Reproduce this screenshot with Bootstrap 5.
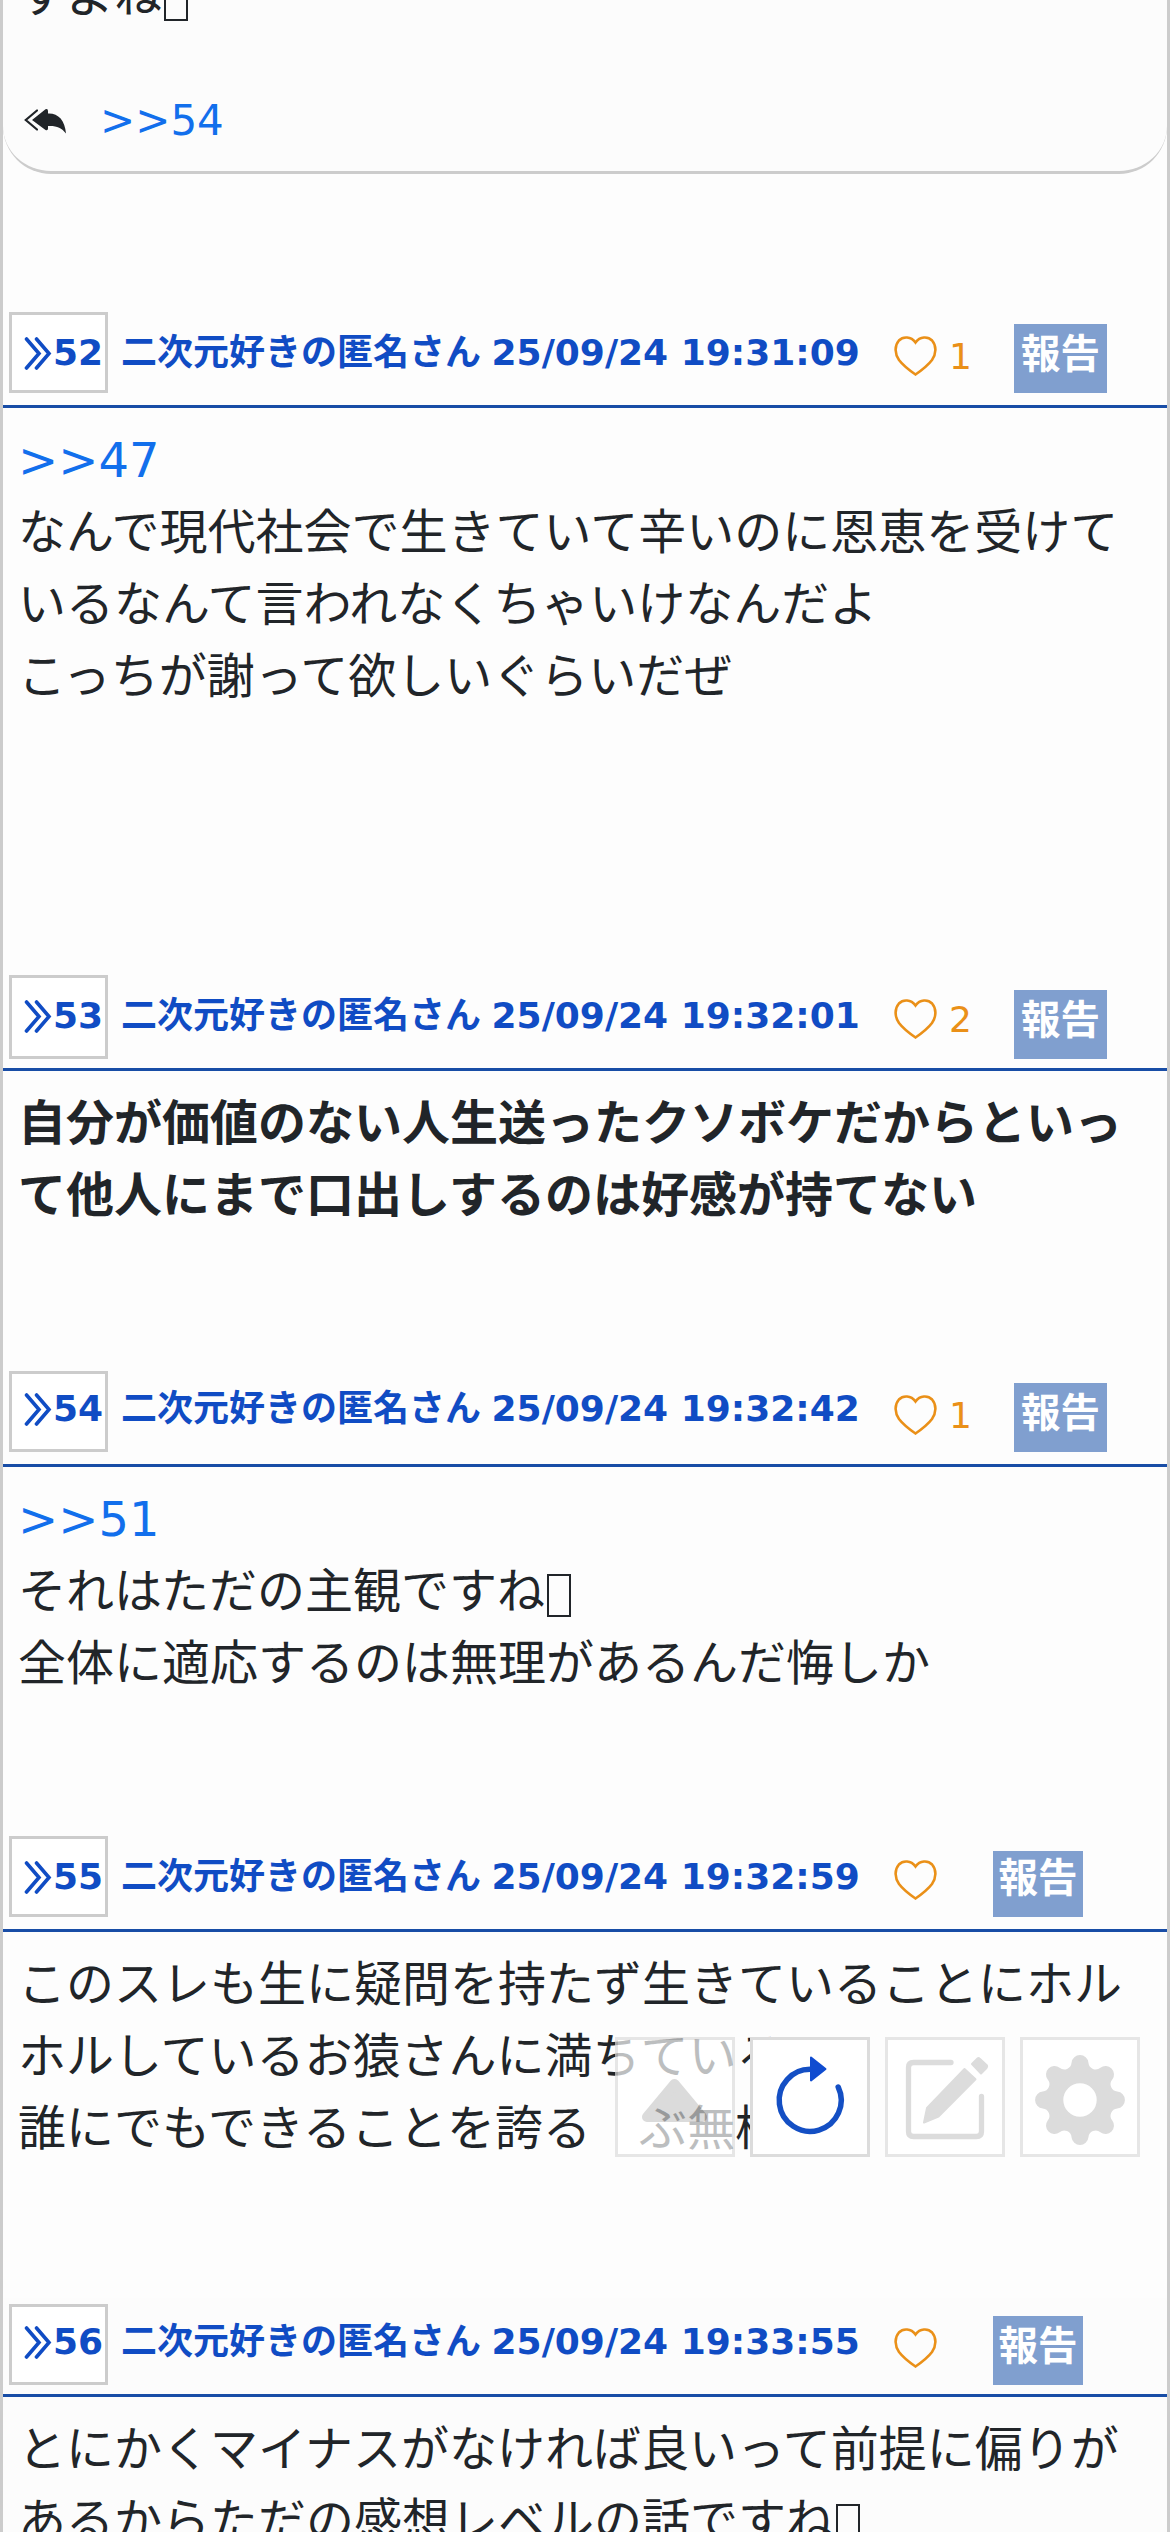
<!DOCTYPE html>
<html lang="ja">
<head>
<meta charset="utf-8">
<meta name="viewport" content="width=device-width, initial-scale=1">
<title>二次元好きの匿名さん</title>
<link rel="stylesheet" href="https://cdn.jsdelivr.net/npm/bootstrap@5.3.0/dist/css/bootstrap.min.css">
<style>
body{font-family:"DejaVu Sans","Noto Sans CJK JP",sans-serif;font-size:48px;line-height:72px;color:#212529;background:#fdfdfd}
.thread{height:2532px;border:solid #ccc;border-width:0 3px}
.post-51{height:309px}
.post-51 .reply-box{height:174px;border-bottom:3px solid #ccc;border-radius:0 0 48px 48px;background:#fcfcfc;padding:0 15px}
.post-51 .tail{margin-top:-41px}
.replies{margin-top:58px;padding-left:6px;font-size:42px;line-height:63px}
.replies a{margin-left:33px}
a{color:#126fec;text-decoration:none}
.glyph-box{width:24px;height:43px;border:2.500px solid #212529;vertical-align:-9px;margin-left:2px}
.post-head{height:99px;border-bottom:3px solid #184da6;padding-left:6px;--box-top:3px;--box-h:81px;--name-top:17px;--heart-top:27px;--rep-top:15px;--rep-h:69px}
.res-no{width:99px;height:var(--box-h);margin-top:var(--box-top);border:3px solid #ccc;background:#fff;color:#104cc4;padding-left:12px}
.res-no,.name-line{font-size:36px;line-height:54px;font-weight:700}
.res-no svg{margin-top:calc(var(--name-top) + 9px - var(--box-top) - 1px)}
.res-no span{margin-top:calc(var(--name-top) - var(--box-top) - 3px);margin-left:1px}
.name-line{color:#104cc4;margin:var(--name-top) 0 0 13px;width:773px;white-space:nowrap}
.name-line time{margin-left:-2px}
.like{width:120px;color:#ea9018;font-size:36px;line-height:54px}
.like svg{margin-top:var(--heart-top)}
.like span{margin:21px 0 0 12px}
.report{width:93px;height:var(--rep-h);margin-top:var(--rep-top);background:#809fcf;color:#fff;font-size:39.500px;line-height:61px;font-weight:700;text-align:center}
.no-like .like{width:99px}
.no-like .report{width:90px}
.post-body{padding:16px 15px 0}
.post-52{height:663px}.post-53{height:396px}.post-54,.post-55{height:465px}
.post-53 .post-head{--box-h:84px;--rep-top:18px}
.post-54 .post-head{--name-top:14px}
.post-55 .post-head{--rep-top:18px;--rep-h:66px}
.post-55 .report{line-height:55px}
.post-56 .post-head{--box-top:6px;--heart-top:30px;--rep-top:18px}
.post-56{background:#fcfcfc;height:234px}
.tools{right:30px;bottom:375px;gap:15px}
.tool{width:120px;height:120px;border:3px solid #dcdcdc;background:#fff}
.tool svg{display:block;margin:-3px}
.tool-dim{border-color:#e6e6e6}
.tool-up{opacity:.7;border-color:#dcdcdc}
</style>
<script src="https://cdn.jsdelivr.net/npm/bootstrap@5.3.0/dist/js/bootstrap.bundle.min.js"></script>
</head>
<body>
<svg class="d-none">
<symbol id="chev" viewBox="0 0 28 33"><path d="M2.5 2 15 16.5 2.5 31M12.500 2 25 16.500 12.500 31" fill="none" stroke="currentColor" stroke-width="3.600" stroke-linecap="round" stroke-linejoin="miter"/></symbol>
<symbol id="heart" viewBox="0 0 43 40"><path d="M21.500 6.500C17 .2 9 .2 4.900 4.500C.2 10 .8 18 5 24C9.500 30 15 34 21.500 38.500C28 34 33.500 30 38 24C42.200 18 42.800 10 38.100 4.500C34 .2 26 .2 21.500 6.500Z" fill="none" stroke="currentColor" stroke-width="2.600"/></symbol>
</svg>
<main class="thread overflow-hidden">
  <article class="post-51">
    <div class="reply-box overflow-hidden">
      <div class="tail">すよね<span class="glyph-box d-inline-block"></span></div>
      <div class="replies d-flex align-items-center">
        <svg width="43" height="26" viewBox="0 0 43 26" fill="#212529"><path d="M13 2.500 1.800 12 13 21.500" fill="none" stroke="#212529" stroke-width="2.200" stroke-linecap="round"/><path d="M8 12 21.500 1.200Q24 .3 24 3V5.500C34 5 41 12 42 25.500C37.500 19.500 32 17.500 24 18V20.500Q24 23 21.500 22Z"/></svg>
        <a href="#">&gt;&gt;54</a>
      </div>
    </div>
  </article>

  <article class="post-52">
    <header class="post-head d-flex align-items-start">
      <div class="res-no d-flex align-items-start flex-shrink-0"><svg width="28" height="33"><use href="#chev"/></svg><span>52</span></div>
      <div class="name-line flex-shrink-0">二次元好きの匿名さん <time>25/09/24 19:31:09</time></div>
      <div class="like d-flex align-items-start flex-shrink-0"><svg width="43" height="40"><use href="#heart"/></svg><span>1</span></div>
      <div class="report flex-shrink-0">報告</div>
    </header>
    <div class="post-body"><a href="#">&gt;&gt;47</a><br>なんで現代社会で生きていて辛いのに恩恵を受けて<br>いるなんて言われなくちゃいけなんだよ<br>こっちが謝って欲しいぐらいだぜ</div>
  </article>

  <article class="post-53">
    <header class="post-head d-flex align-items-start">
      <div class="res-no d-flex align-items-start flex-shrink-0"><svg width="28" height="33"><use href="#chev"/></svg><span>53</span></div>
      <div class="name-line flex-shrink-0">二次元好きの匿名さん <time>25/09/24 19:32:01</time></div>
      <div class="like d-flex align-items-start flex-shrink-0"><svg width="43" height="40"><use href="#heart"/></svg><span>2</span></div>
      <div class="report flex-shrink-0">報告</div>
    </header>
    <div class="post-body fw-bold">自分が価値のない人生送ったクソボケだからといっ<br>て他人にまで口出しするのは好感が持てない</div>
  </article>

  <article class="post-54">
    <header class="post-head d-flex align-items-start">
      <div class="res-no d-flex align-items-start flex-shrink-0"><svg width="28" height="33"><use href="#chev"/></svg><span>54</span></div>
      <div class="name-line flex-shrink-0">二次元好きの匿名さん <time>25/09/24 19:32:42</time></div>
      <div class="like d-flex align-items-start flex-shrink-0"><svg width="43" height="40"><use href="#heart"/></svg><span>1</span></div>
      <div class="report flex-shrink-0">報告</div>
    </header>
    <div class="post-body"><a href="#">&gt;&gt;51</a><br>それはただの主観ですね<span class="glyph-box d-inline-block"></span><br>全体に適応するのは無理があるんだ悔しか</div>
  </article>

  <article class="post-55 no-like">
    <header class="post-head d-flex align-items-start">
      <div class="res-no d-flex align-items-start flex-shrink-0"><svg width="28" height="33"><use href="#chev"/></svg><span>55</span></div>
      <div class="name-line flex-shrink-0">二次元好きの匿名さん <time>25/09/24 19:32:59</time></div>
      <div class="like d-flex align-items-start flex-shrink-0"><svg width="43" height="40"><use href="#heart"/></svg></div>
      <div class="report flex-shrink-0">報告</div>
    </header>
    <div class="post-body">このスレも生に疑問を持たず生きていることにホル<br>ホルしているお猿さんに満ちている<br>誰にでもできることを誇る　ぶ無様</div>
  </article>

  <article class="post-56 no-like overflow-hidden">
    <header class="post-head d-flex align-items-start">
      <div class="res-no d-flex align-items-start flex-shrink-0"><svg width="28" height="33"><use href="#chev"/></svg><span>56</span></div>
      <div class="name-line flex-shrink-0">二次元好きの匿名さん <time>25/09/24 19:33:55</time></div>
      <div class="like d-flex align-items-start flex-shrink-0"><svg width="43" height="40"><use href="#heart"/></svg></div>
      <div class="report flex-shrink-0">報告</div>
    </header>
    <div class="post-body">とにかくマイナスがなければ良いって前提に偏りが<br>あるからただの感想レベルの話ですね<span class="glyph-box d-inline-block"></span></div>
  </article>
</main>

<nav class="tools position-fixed d-flex">
  <div class="tool tool-up"><svg width="120" height="120"><path d="M59.500 47 87 80H32Z" fill="#ccc" stroke="#ccc" stroke-width="10" stroke-linejoin="round"/></svg></div>
  <div class="tool"><svg width="120" height="120"><path d="M61 32.300A31 31 0 1 0 88.200 50" fill="none" stroke="#144fc4" stroke-width="5.500" stroke-linecap="round"/><path d="M61 20.500 75.500 32 61 43.500Z" fill="#104cd0" stroke="#104cd0" stroke-width="2" stroke-linejoin="round"/></svg></div>
  <div class="tool tool-dim"><svg width="120" height="120"><path d="M66 25.500H28.500Q23.500 25.500 23.500 30.500V94.500Q23.500 99.500 28.500 99.500H91.500Q96.500 99.500 96.500 94.500V59.500" fill="none" stroke="#dcdcdc" stroke-width="5.300" stroke-linecap="round"/><path d="M79.500 32 90.500 42.300 53.500 79.500 39 85.500 42 71Z M92.500 21.500Q93.500 20.500 94.500 21.500L102 28.500Q102.500 29.500 101.500 31L96 36.500 87 27Z" fill="#dcdcdc" stroke="#dcdcdc" stroke-width="2" stroke-linejoin="round"/></svg></div>
  <div class="tool tool-dim"><svg width="120" height="120"><g transform="translate(60 63)"><path fill="#dcdcdc" fill-rule="evenodd" d="M37.250-8.460A8.500 8.500 0 0 1 37.250 8.460A7.260 7.260 0 0 0 32.300 20.400A8.500 8.500 0 0 1 20.400 32.300A7.260 7.260 0 0 0 8.460 37.250A8.500 8.500 0 0 1-8.460 37.250A7.260 7.260 0 0 0-20.400 32.300A8.500 8.500 0 0 1-32.300 20.400A7.260 7.260 0 0 0-37.250 8.460A8.500 8.500 0 0 1-37.250-8.460A7.260 7.260 0 0 0-32.300-20.400A8.500 8.500 0 0 1-20.400-32.300A7.260 7.260 0 0 0-8.460-37.250A8.500 8.500 0 0 1 8.460-37.250A7.260 7.260 0 0 0 20.400-32.300A8.500 8.500 0 0 1 32.300-20.400A7.260 7.260 0 0 0 37.250-8.460ZM16.700 0A16.700 16.700 0 1 0-16.700 0A16.700 16.700 0 1 0 16.700 0Z"/></g></svg></div>
</nav>
</body>
</html>
